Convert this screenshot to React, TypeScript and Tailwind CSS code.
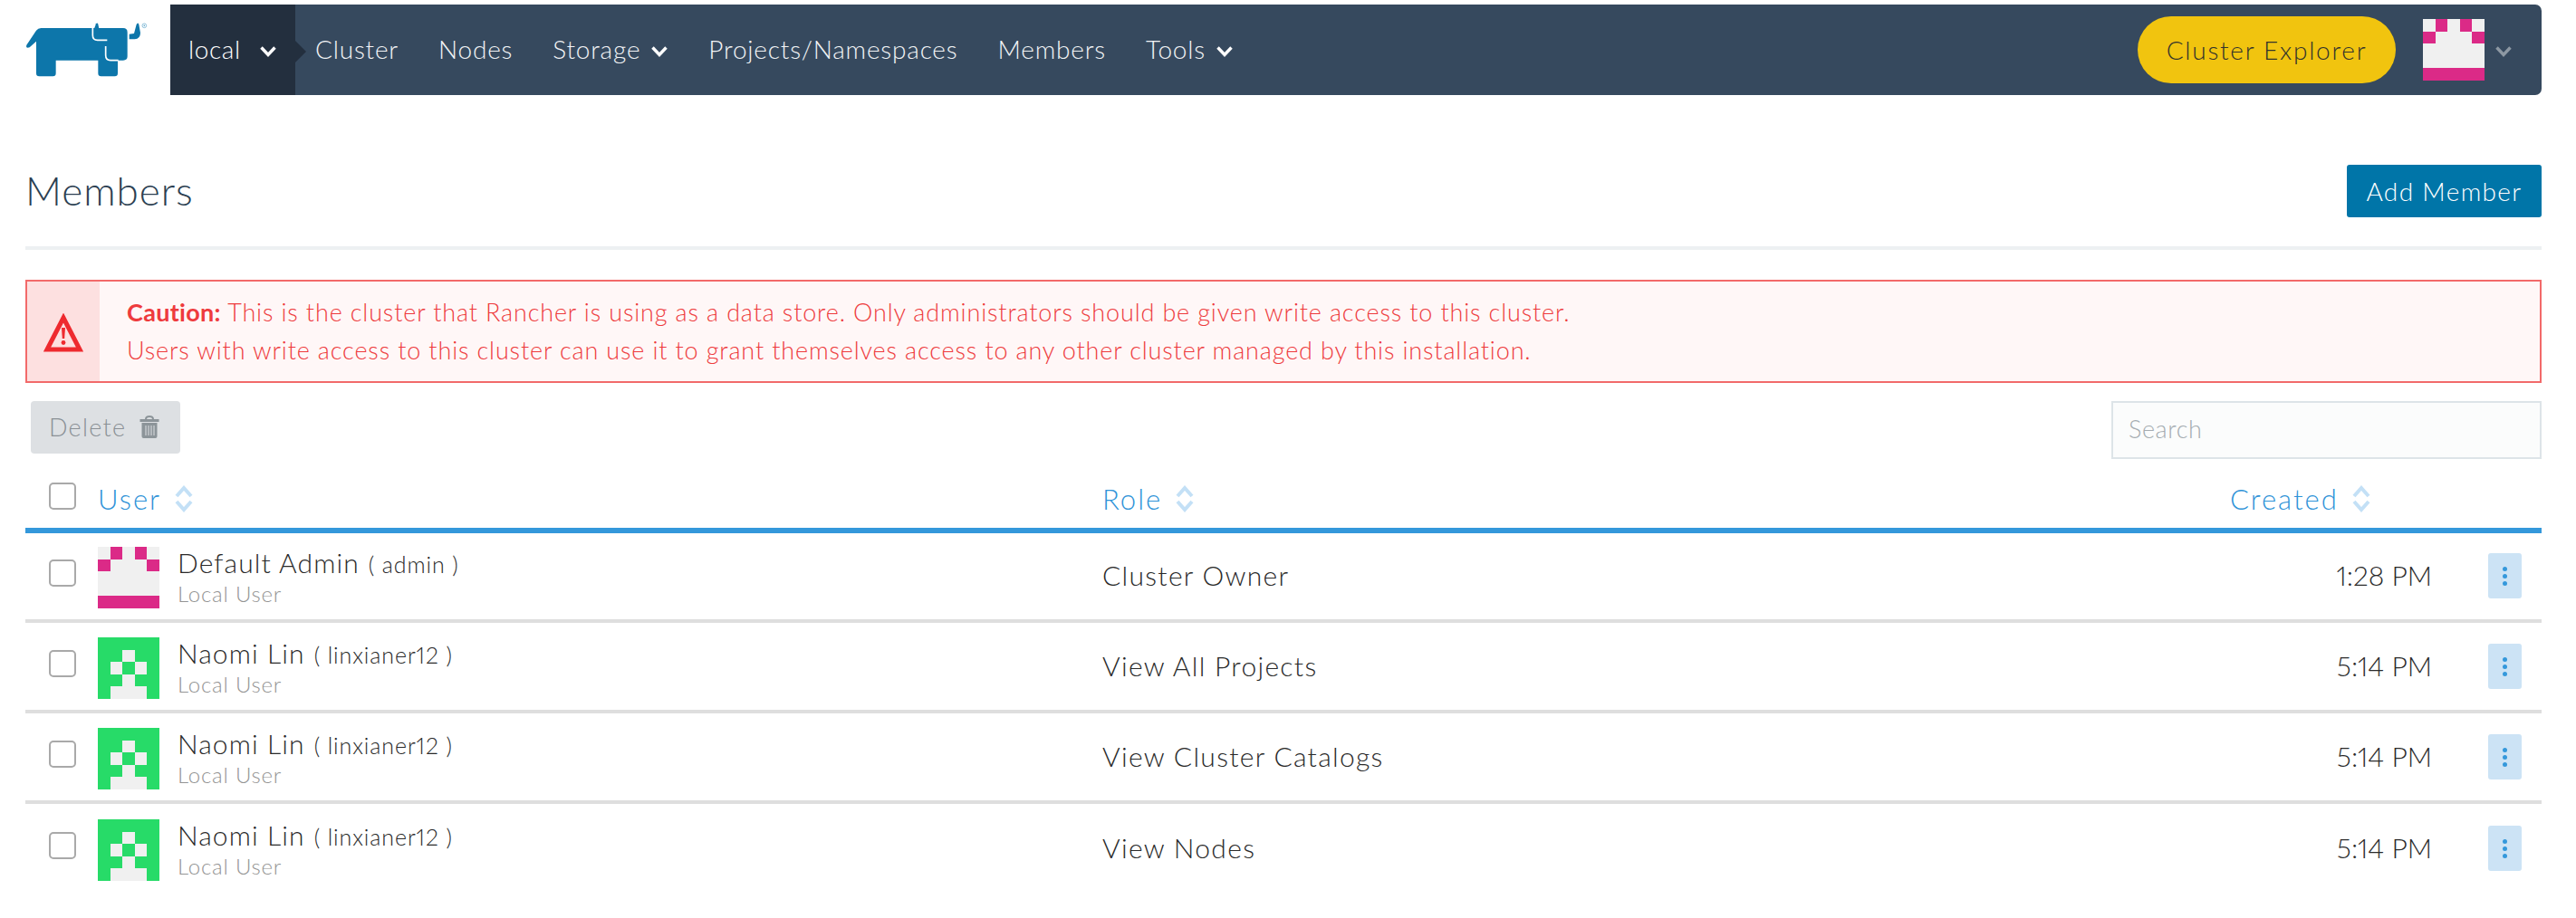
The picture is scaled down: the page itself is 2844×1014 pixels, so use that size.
import React from "react";

const navItems = [
  { label: "Cluster" },
  { label: "Nodes" },
  { label: "Storage", caret: true },
  { label: "Projects/Namespaces" },
  { label: "Members" },
  { label: "Tools", caret: true },
];

const members = [
  { name: "Default Admin", login: "admin", role: "Cluster Owner", time: "1:28 PM", avatar: "pink", pad: "pt-[15px]" },
  { name: "Naomi Lin", login: "linxianer12", role: "View All Projects", time: "5:14 PM", avatar: "green", pad: "pt-[16px]" },
  { name: "Naomi Lin", login: "linxianer12", role: "View Cluster Catalogs", time: "5:14 PM", avatar: "green", pad: "pt-[16px]" },
  { name: "Naomi Lin", login: "linxianer12", role: "View Nodes", time: "5:14 PM", avatar: "green", pad: "pt-[17px]" },
];

// 5x5 identicons, 1 = coloured cell
const avatars: Record<string, { color: string; cells: number[][] }> = {
  pink: {
    color: "#db2a87",
    cells: [
      [0, 1, 0, 1, 0],
      [1, 0, 0, 0, 1],
      [0, 0, 0, 0, 0],
      [0, 0, 0, 0, 0],
      [1, 1, 1, 1, 1],
    ],
  },
  green: {
    color: "#27db68",
    cells: [
      [1, 1, 1, 1, 1],
      [1, 1, 0, 1, 1],
      [1, 0, 1, 0, 1],
      [1, 1, 0, 1, 1],
      [1, 0, 0, 0, 1],
    ],
  },
};

function Avatar({ kind }: { kind: string }) {
  const { color, cells } = avatars[kind];
  return (
    <svg width="68" height="68" viewBox="0 0 5 5" shapeRendering="crispEdges" className="shrink-0">
      <rect width="5" height="5" fill="#f0f0f0" />
      {cells.map((row, y) =>
        row.map((on, x) => (on ? <rect key={`${x}-${y}`} x={x} y={y} width="1" height="1" fill={color} /> : null)),
      )}
    </svg>
  );
}

function Caret({ className }: { className: string }) {
  return (
    <svg width="20" height="14" viewBox="0 0 20 14" fill="none" className={className}>
      <path d="M2.5 2.5 L10 10.5 L17.5 2.5" stroke="currentColor" strokeWidth="3.4" />
    </svg>
  );
}

function SortIcon() {
  return (
    <svg width="20" height="30" viewBox="0 0 20 30" fill="none" className="shrink-0">
      <path d="M2 12 L10 3 L18 12" stroke="#c3e0f6" strokeWidth="4" />
      <path d="M2 18 L10 27 L18 18" stroke="#c3e0f6" strokeWidth="4" />
    </svg>
  );
}

function Checkbox() {
  return <span className="block h-[30px] w-[30px] rounded-[5px] border-2 border-[#a9a9a9] bg-white" />;
}

function Logo() {
  return (
    <svg width="160" height="80" viewBox="0 0 480 240" className="absolute left-[20px] top-[15px]">
      <path
        d="M28 104 L60 56 Q66 48 76 48 L348 48 Q362 48 362 62 L362 142 Q362 155 348 155 L330 155 L330 198 Q330 208 320 208 L275 208 Q265 208 265 198 L265 155 L125 155 L125 198 Q125 208 115 208 L70 208 Q60 208 60 198 L60 92 L38 112 Q24 116 28 104 Z"
        fill="#0d76aa"
      />
      <path d="M247 30 L247 72 Q247 88 263 88 L295 88" stroke="#fff" strokeWidth="5" fill="none" />
      <path d="M290 108 L290 138 Q290 155 306 155 L332 155" stroke="#fff" strokeWidth="5" fill="none" />
      <path d="M252 50 L258 34 Q262 28 265 35 L268 50 Z" fill="#0d76aa" />
      <path d="M252 48 L268 48 L268 74 Q274 78 290 78 L290 84 L262 84 Q252 82 252 70 Z" fill="#0d76aa" />
      <path d="M368 68 L384 66 L392 36 Q397 27 400 36 L405 64 Q405 84 386 85 L368 85 Z" fill="#0d76aa" />
      <circle cx="418" cy="40" r="7" fill="none" stroke="#5aa3c9" strokeWidth="2" />
      <circle cx="418" cy="40" r="2.5" fill="#5aa3c9" />
    </svg>
  );
}

function TopNav() {
  return (
    <div className="flex h-[100px] w-full">
      <div className="w-[160px] shrink-0" />
      <div className="flex h-full flex-1 rounded-r-[7px] bg-[#36495e]">
        <div className="relative flex h-full w-[138px] shrink-0 bg-[#232f3e] pl-[20px] pt-[32px] text-[28px] leading-[34px] tracking-[0.6px] text-white">
          local
          <Caret className="absolute left-[98px] top-[45px] text-white" />
          <span className="absolute left-full top-[40px] h-0 w-0 border-y-[12px] border-l-[12px] border-y-transparent border-l-[#232f3e]" />
        </div>
        <div className="flex h-full flex-1 items-start gap-[44px] pl-[22px] pt-[32px] text-[28px] leading-[34px] tracking-[0.8px] text-[#f2f4f6]">
          {navItems.map((item) => (
            <span key={item.label} className="flex items-center gap-[11px]">
              {item.label}
              {item.caret ? <Caret className="mt-[6px] text-white" /> : null}
            </span>
          ))}
        </div>
        <div className="mt-[13px] flex h-[74px] w-[285px] items-center justify-center rounded-full bg-[#f1c40f] text-[28px] tracking-[1.75px] text-[#33332c]">
          Cluster Explorer
        </div>
        <div className="ml-[30px] mt-[16px]">
          <Avatar kind="pink" />
        </div>
        <Caret className="ml-[11px] mr-[32px] mt-[45px] text-[#8d98a3]" />
      </div>
    </div>
  );
}

function MemberRow({ m }: { m: (typeof members)[number] }) {
  return (
    <div className={`grid grid-cols-[80px_1109px_1245px_223px_1fr] items-center border-b-4 border-[#dedede] pb-[12px] last:border-b-0 ${m.pad}`}>
      <div className="mb-[10px] pl-[26px]">
        <Checkbox />
      </div>
      <div className="flex h-[68px] items-center gap-[20px]">
        <Avatar kind={m.avatar} />
        <div className="mb-[3px] flex flex-col">
          <div className="flex items-baseline gap-[10px] whitespace-pre leading-[36px] text-[#2a2a2a] proportional-nums">
            <span className="text-[30px] tracking-[1.1px]">{m.name}</span>
            <span className="text-[25px] tracking-[0.9px]">( {m.login} )</span>
          </div>
          <span className="text-[24px] leading-[29px] tracking-[0.8px] text-[#949494]">Local User</span>
        </div>
      </div>
      <div className="mb-[6px] text-[30px] tracking-[1.3px] text-[#2a2a2a]">{m.role}</div>
      <div className="mb-[6px] text-right text-[30px] text-[#2a2a2a] proportional-nums">{m.time}</div>
      <div className="mb-[4px] flex pl-[62px]">
        <button className="flex h-[50px] w-[37px] flex-col items-center justify-center gap-[3px] rounded-[3px] bg-[#cce3f5]">
          <span className="h-[5px] w-[5px] rounded-full bg-[#3498db]" />
          <span className="h-[5px] w-[5px] rounded-full bg-[#3498db]" />
          <span className="h-[5px] w-[5px] rounded-full bg-[#3498db]" />
        </button>
      </div>
    </div>
  );
}

export default function App() {
  return (
    <div className="relative min-h-[1014px] bg-white pl-[28px] pr-[38px] pt-[5px] font-['Lato',sans-serif] font-light">
      <Logo />
      <TopNav />

      <div className="mt-[77px] flex h-[94px] items-start justify-between border-b-4 border-[#edf0f2]">
        <h1 className="mt-[3px] text-[44px] leading-[50px] tracking-[1px] text-[#2c3f52]">Members</h1>
        <button className="h-[58px] w-[215px] rounded-[3px] bg-[#0075a8] text-[28px] tracking-[1.35px] text-white">
          Add Member
        </button>
      </div>

      <div className="mt-[33px] flex h-[114px] border-2 border-[#f26a6a] bg-[#fff7f7]">
        <div className="flex w-[80px] shrink-0 items-center justify-center bg-[#fde0e0]">
          <svg width="44" height="44" viewBox="0 0 44 44" fill="none" className="-ml-[1px] mt-[3px]">
            <path d="M22 5 L40 40 L4 40 Z" stroke="#ee2a2f" strokeWidth="5" />
            <path d="M20 16 L24 16 L23.2 28 L20.8 28 Z" fill="#ee2a2f" />
            <circle cx="22" cy="32.5" r="2.4" fill="#ee2a2f" />
          </svg>
        </div>
        <div className="pl-[30px] pt-[13px] text-[27px] leading-[42px] tracking-[0.85px] text-[#ee3b3d]">
          <p>
            <b className="font-bold tracking-[0.3px]">Caution:</b> This is the cluster that Rancher is using as a data store. Only
            administrators should be given write access to this cluster.
          </p>
          <p>Users with write access to this cluster can use it to grant themselves access to any other cluster managed by this installation.</p>
        </div>
      </div>

      <div className="mt-[20px] flex h-[64px] items-start justify-between">
        <button className="ml-[6px] flex h-[58px] w-[165px] items-center gap-[14px] rounded-[4px] bg-[#dde0e3] pl-[20px] text-[27px] tracking-[1.3px] text-[#8a9095]">
          Delete
          <svg width="22" height="26" viewBox="0 0 22 26" fill="none">
            <path d="M7 4 Q7 1 11 1 Q15 1 15 4" stroke="#8c9499" strokeWidth="2" />
            <rect x="0.5" y="4" width="21" height="3" fill="#8c9499" />
            <path d="M2.5 8 L19.5 8 L19.5 23 Q19.5 25 17.5 25 L4.5 25 Q2.5 25 2.5 23 Z" fill="#8c9499" />
            <path d="M7 11 V22 M10 11 V22 M13 11 V22 M16 11 V22" stroke="#dde0e3" strokeWidth="1" />
          </svg>
        </button>
        <input
          placeholder="Search"
          className="h-[64px] w-[475px] border-2 border-[#dde4e8] bg-[#fbfcfc] pb-[3px] pl-[17px] text-[27px] font-light tracking-[0.6px] placeholder:text-[#a5acb1]"
        />
      </div>

      <div className="grid h-[82px] grid-cols-[80px_1109px_1245px_1fr] items-start border-b-[6px] border-[#3498db] pt-[26px] text-[31px] leading-[36px] tracking-[2px] text-[#2f93d8]">
        <div className="pl-[26px]">
          <Checkbox />
        </div>
        <div className="flex items-center gap-[15px]">
          User <SortIcon />
        </div>
        <div className="flex items-center gap-[15px]">
          Role <SortIcon />
        </div>
        <div className="flex items-center gap-[15px]">
          Created <SortIcon />
        </div>
      </div>

      {members.map((m, i) => (
        <MemberRow key={i} m={m} />
      ))}
    </div>
  );
}
